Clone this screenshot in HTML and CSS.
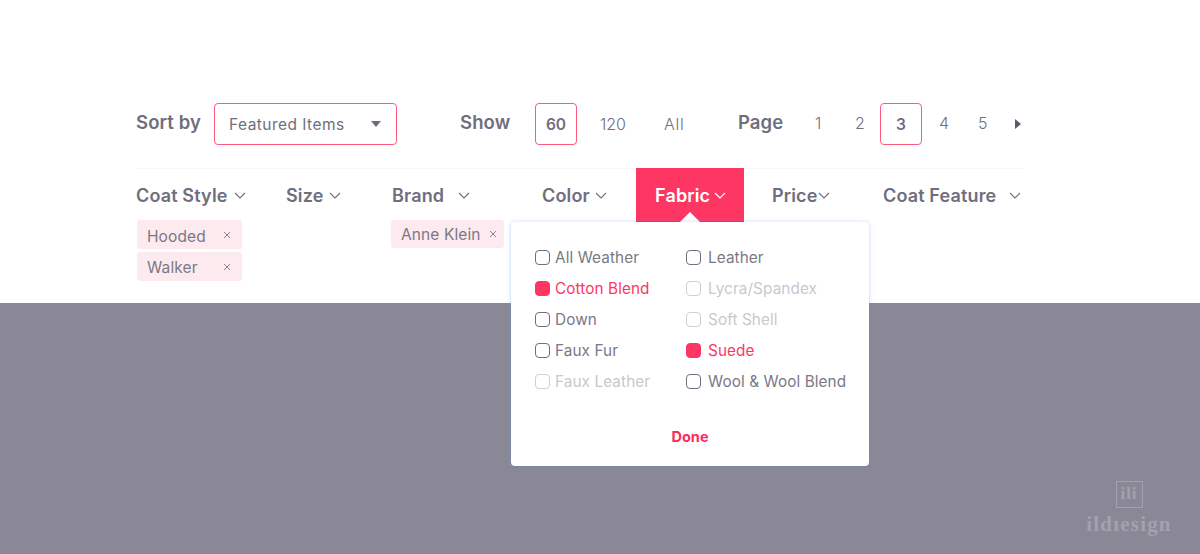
FILE: index.html
```html
<!DOCTYPE html>
<html lang="en">
<head>
<meta charset="utf-8">
<title>Filters</title>
<link rel="stylesheet" href="styles.css">
</head>
<body>
<main class="panel">
  <section class="toolbar">
    <span class="label sort-label">Sort by</span>
    <div class="select"><span>Featured Items</span><i class="caret"></i></div>
    <span class="label show-label">Show</span>
    <span class="box">60</span>
    <span class="opt opt-120">120</span>
    <span class="opt opt-all">All</span>
    <span class="label page-label">Page</span>
    <span class="num n1">1</span>
    <span class="num n2">2</span>
    <span class="box">3</span>
    <span class="num n4">4</span>
    <span class="num n5">5</span>
    <i class="next"></i>
  </section>
  <section class="filters">
    <div class="col">
      <div class="tab"><span>Coat Style</span><svg class="chev chev-a" viewBox="0 0 12 7"><path d="M1 1l5 5 5-5"/></svg></div>
      <div class="tags tags-a">
        <span class="tag first"><span>Hooded</span><svg class="x" viewBox="0 0 8 8"><path d="M1 1l6 6M7 1L1 7"/></svg></span>
        <span class="tag second"><span>Walker</span><svg class="x" viewBox="0 0 8 8"><path d="M1 1l6 6M7 1L1 7"/></svg></span>
      </div>
    </div>
    <div class="col">
      <div class="tab"><span>Size</span><svg class="chev chev-b" viewBox="0 0 12 7"><path d="M1 1l5 5 5-5"/></svg></div>
    </div>
    <div class="col">
      <div class="tab"><span>Brand</span><svg class="chev chev-c" viewBox="0 0 12 7"><path d="M1 1l5 5 5-5"/></svg></div>
      <div class="tags tags-b"><span class="tag brand"><span>Anne Klein</span><svg class="x" viewBox="0 0 8 8"><path d="M1 1l6 6M7 1L1 7"/></svg></span></div>
    </div>
    <div class="col">
      <div class="tab"><span>Color</span><svg class="chev chev-b" viewBox="0 0 12 7"><path d="M1 1l5 5 5-5"/></svg></div>
    </div>
    <div class="col col-active">
      <div class="tab active"><span>Fabric</span><svg class="chev chev-f" viewBox="0 0 12 7"><path d="M1 1l5 5 5-5"/></svg></div>
      <div class="popup">
        <div class="options">
          <label class="check"><i></i>All Weather</label>
          <label class="check"><i></i>Leather</label>
          <label class="check on"><i></i>Cotton Blend</label>
          <label class="check off"><i></i>Lycra/Spandex</label>
          <label class="check"><i></i>Down</label>
          <label class="check off"><i></i>Soft Shell</label>
          <label class="check"><i></i>Faux Fur</label>
          <label class="check on"><i></i>Suede</label>
          <label class="check off"><i></i>Faux Leather</label>
          <label class="check"><i></i>Wool &amp; Wool Blend</label>
        </div>
        <div class="done">Done</div>
      </div>
    </div>
    <div class="col col-price">
      <div class="tab"><span>Price</span><svg class="chev" viewBox="0 0 12 7"><path d="M1 1l5 5 5-5"/></svg></div>
    </div>
    <div class="col">
      <div class="tab"><span>Coat Feature</span><svg class="chev chev-e" viewBox="0 0 12 7"><path d="M1 1l5 5 5-5"/></svg></div>
    </div>
  </section>
</main>
<footer class="backdrop">
  <div class="mark">
    <div class="mark-box">ili</div>
    <div class="mark-word">ildıesign</div>
  </div>
</footer>
</body>
</html>
```
FILE: styles.css
```css
* { box-sizing: border-box; }
html, body { margin: 0; height: 100%; }
body {
  width: 1200px;
  height: 554px;
  overflow: hidden;
  display: flex;
  flex-direction: column;
  background: #8a8896;
  font-family: "Inter", "Liberation Sans", sans-serif;
  color: #706e7e;
}
.panel {
  height: 303px;
  background: #fff;
  padding: 103px 0 0 136px;
  flex: none;
}
.toolbar {
  display: flex;
  align-items: center;
  height: 42px;
  width: 890px;
}
.label { font-size: 18.5px; font-weight: 600; letter-spacing: .1px; position: relative; top: -2px; flex: none; }
.sort-label { width: 78px; }
.select {
  width: 183px;
  height: 42px;
  flex: none;
  padding: 0 15px 0 14px;
  border: 1.5px solid #fd5a80;
  border-radius: 4px;
  display: flex;
  align-items: center;
  justify-content: space-between;
  font-size: 15.5px;
  letter-spacing: .45px;
}
.caret {
  width: 0;
  height: 0;
  border: 5.5px solid transparent;
  border-top: 6px solid #706e7e;
  border-bottom: 0;
}
.show-label { margin-left: 63px; width: 75px; }
.box {
  width: 42px;
  height: 42px;
  flex: none;
  border: 1.5px solid #fd5a80;
  border-radius: 4px;
  display: flex;
  align-items: center;
  justify-content: center;
  font-size: 15.5px;
  font-weight: 600;
}
.opt { font-size: 16px; font-weight: 300; flex: none; }
.opt-120 { margin-left: 23px; width: 64px; }
.opt-all { width: 74px; letter-spacing: .8px; }
.page-label { width: 77px; }
.num { font-size: 16px; font-weight: 300; position: relative; top: -1px; flex: none; }
.n1 { width: 40px; }
.n2 { width: 25px; }
.n4 { margin-left: 17px; width: 39px; }
.n5 { width: 37px; }
.next {
  width: 0;
  height: 0;
  border: 5px solid transparent;
  border-left: 6px solid #5d5b6b;
  border-right: 0;
}
.filters {
  margin-top: 23px;
  width: 886px;
  border-top: 1px solid #f6f6f8;
  display: grid;
  grid-template-columns: 150px 106px 150px 94px 108px 139px 139px;
}
.col { position: relative; }
.tab {
  height: 54px;
  display: flex;
  align-items: center;
  margin-top: -1px;
  padding-top: 1px;
  font-size: 18px;
  font-weight: 600;
  letter-spacing: .15px;
  white-space: nowrap;
}
.chev { width: 12px; height: 7px; flex: none; fill: none; stroke: currentColor; stroke-width: 1.1; }
.chev-a { margin-left: 6px; }
.chev-b { margin-left: 5px; }
.chev-c { margin-left: 14px; }
.chev-f { margin-left: 4px; }
.chev-e { margin-left: 13px; }
.tab.active {
  background: #fd3664;
  box-shadow: inset 0 -1px 0 rgba(150, 20, 60, .35);
  color: #fff;
  padding-left: 19px;
  position: relative;
}
.tab.active::after {
  content: "";
  position: absolute;
  left: 44px;
  bottom: 0;
  border: 10px solid transparent;
  border-top: 0;
  border-bottom: 10px solid #fff;
}
.col-price { padding-left: 28px; }
.tags { display: flex; flex-direction: column; gap: 3px; }
.tags-a { margin-top: -2px; margin-left: 1px; width: 105px; }
.tag {
  height: 29px;
  background: #fdeaef;
  border-radius: 3px;
  padding: 0 11px 0 10px;
  display: flex;
  align-items: center;
  justify-content: space-between;
  font-size: 15.5px;
  letter-spacing: .1px;
  font-weight: 400;
  color: #7a7886;
}
.tag.first span { position: relative; top: 2px; }
.tag.second span { position: relative; top: 1px; }
.x { width: 8px; height: 8px; flex: none; fill: none; stroke: #7a7886; stroke-width: .9; }
.tags-b { margin-top: -2px; margin-left: -1px; width: 113px; }
.tag.brand { height: 28px; padding-right: 7px; padding-left: 10px; }
.popup {
  position: absolute;
  z-index: 2;
  left: -125px;
  top: 53px;
  width: 358px;
  height: 244px;
  padding: 20px 0 0 24px;
  background: #fff;
  border-radius: 4px;
  box-shadow: 0 0 5px rgba(120, 180, 255, .35), 0 1px 2px rgba(70, 70, 100, .2);
}
.options {
  display: grid;
  grid-template-columns: 151px 1fr;
  grid-auto-rows: 31px;
}
.check {
  display: flex;
  align-items: center;
  gap: 5px;
  font-size: 15.3px;
  letter-spacing: .1px;
  font-weight: 400;
  white-space: nowrap;
  color: #7a7886;
}
.check:nth-child(even) { gap: 7px; }
.check i {
  width: 15px;
  height: 15px;
  border: 1.5px solid #716f7f;
  border-radius: 4px;
  flex: none;
}
.check.on { color: #fd3664; }
.check.on i { background: #fd3664; border-color: #fd3664; }
.check.off { color: #c9c8ce; }
.check.off i { border-color: #cfced4; }
.done {
  margin: 31px 0 0 -24px;
  text-align: center;
  font-size: 14.5px;
  font-weight: 700;
  color: #fd2a5c;
}
.backdrop {
  flex: 1;
  display: flex;
  justify-content: flex-end;
  align-items: flex-start;
  padding: 178px 29px 0 0;
}
.mark { width: 84px; display: flex; flex-direction: column; align-items: center; color: #a3a1ad; font-family: "Liberation Serif", serif; font-weight: 700; }
.mark-box {
  width: 27px;
  height: 27px;
  border: 1.5px solid #a3a1ad;
  text-align: center;
  font-size: 17px;
  letter-spacing: 1px;
  line-height: 24px;
}
.mark-word { font-size: 21px; line-height: 22px; letter-spacing: 1.2px; margin-top: 5px; white-space: nowrap; }
```
